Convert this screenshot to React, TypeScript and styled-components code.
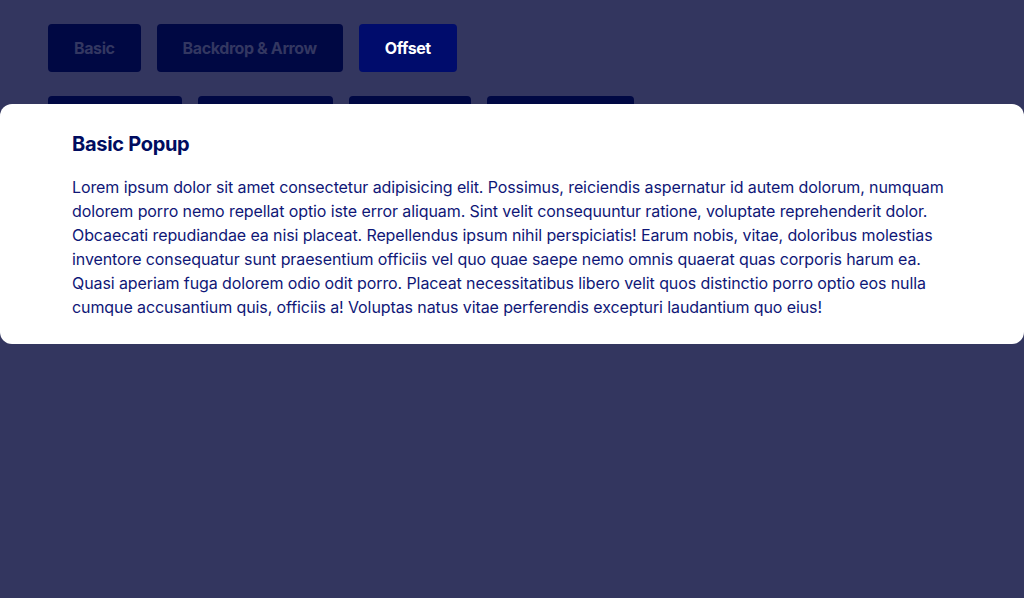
import React from "react";
import styled, { createGlobalStyle } from "styled-components";

const GlobalStyle = createGlobalStyle`
  html, body {
    margin: 0;
    padding: 0;
    background: #33365f;
    font-family: Inter, "Noto Sans", sans-serif;
  }
`;

const Page = styled.div`
  display: flex;
  flex-direction: column;
  gap: 24px;
  padding: 24px 48px;
  min-height: 598px;
  box-sizing: border-box;
`;

const ButtonRow = styled.div`
  display: flex;
  gap: 16px;
`;

const TxtButton = styled.button<{ $active?: boolean }>`
  height: 48px;
  padding: 0 26px;
  border: none;
  border-radius: 4px;
  font-family: inherit;
  font-weight: 700;
  font-size: 16px;
  letter-spacing: -0.4px;
  cursor: pointer;
  background-color: ${(p) => (p.$active ? "#000c6c" : "#000843")};
  color: ${(p) => (p.$active ? "#ffffff" : "#333761")};
`;

const Popup = styled.div`
  position: fixed;
  top: 104px;
  left: 0;
  right: 0;
  background: #ffffff;
  border-radius: 12px;
  padding: 26px 72px 25px;
`;

const Title = styled.h2`
  margin: 0 0 17px;
  font-size: 20px;
  line-height: 28px;
  font-weight: 700;
  letter-spacing: -0.3px;
  color: #000c5f;
`;

const Body = styled.p`
  margin: 0;
  font-size: 16px;
  line-height: 24px;
  letter-spacing: -0.1px;
  color: #0f1777;
`;

const topButtons = ["Basic", "Backdrop & Arrow", "Offset"];
const moreButtons = ["Top Center", "Top Middle", "Top Right", "Bottom Right"];

const App: React.FC = () => {
  return (
    <>
      <GlobalStyle />
      <Page>
        <ButtonRow>
          {topButtons.map((label) => (
            <TxtButton key={label} $active={label === "Offset"}>
              {label}
            </TxtButton>
          ))}
        </ButtonRow>
        <ButtonRow>
          {moreButtons.map((label) => (
            <TxtButton key={label}>{label}</TxtButton>
          ))}
        </ButtonRow>
      </Page>
      <Popup>
        <Title>Basic Popup</Title>
        <Body>
          Lorem ipsum dolor sit amet consectetur adipisicing elit. Possimus,
          reiciendis aspernatur id autem dolorum, numquam dolorem porro nemo
          repellat optio iste error aliquam. Sint velit consequuntur ratione,
          voluptate reprehenderit dolor. Obcaecati repudiandae ea nisi placeat.
          Repellendus ipsum nihil perspiciatis! Earum nobis, vitae, doloribus
          molestias inventore consequatur sunt praesentium officiis vel quo quae
          saepe nemo omnis quaerat quas corporis harum ea. Quasi aperiam fuga
          dolorem odio odit porro. Placeat necessitatibus libero velit quos
          distinctio porro optio eos nulla cumque accusantium quis, officiis a!
          Voluptas natus vitae perferendis excepturi laudantium quo eius!
        </Body>
      </Popup>
    </>
  );
};

export default App;
